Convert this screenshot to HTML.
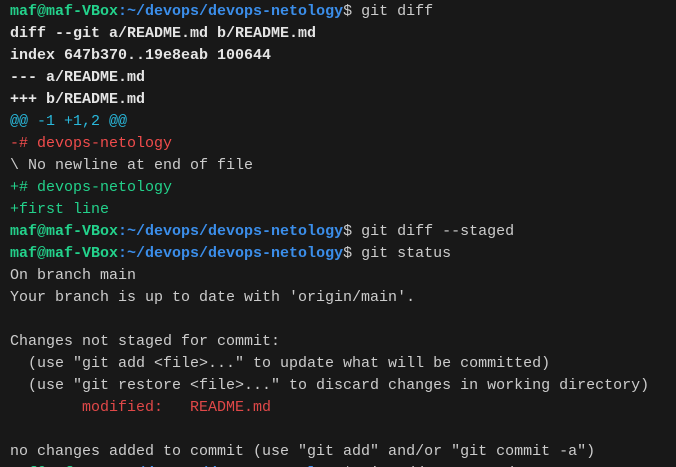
<!DOCTYPE html>
<html><head><meta charset="utf-8"><style>
html,body{margin:0;padding:0;background:#181818;width:676px;height:467px;overflow:hidden}
pre{margin:0;padding:1px 0 0 10px;font-family:"Liberation Mono",monospace;font-size:15px;line-height:22px;color:#cccccc;white-space:pre}
.b{font-weight:bold}
.g{color:#23d18b;font-weight:bold}
.u{color:#3b8eea;font-weight:bold}
.c{color:#29b8db}
.r{color:#f14c4c}
.gr{color:#23d18b}
.dr{color:#e04848}
.w{color:#e5e5e5;font-weight:bold}
</style></head><body><pre><span class="g">maf@maf-VBox</span><span class="u">:~/devops/devops-netology</span>$ git diff
<span class="w">diff --git a/README.md b/README.md</span>
<span class="w">index 647b370..19e8eab 100644</span>
<span class="w">--- a/README.md</span>
<span class="w">+++ b/README.md</span>
<span class="c">@@ -1 +1,2 @@</span>
<span class="r">-# devops-netology</span>
\ No newline at end of file
<span class="gr">+# devops-netology</span>
<span class="gr">+first line</span>
<span class="g">maf@maf-VBox</span><span class="u">:~/devops/devops-netology</span>$ git diff --staged
<span class="g">maf@maf-VBox</span><span class="u">:~/devops/devops-netology</span>$ git status
On branch main
Your branch is up to date with 'origin/main'.

Changes not staged for commit:
  (use "git add &lt;file&gt;..." to update what will be committed)
  (use "git restore &lt;file&gt;..." to discard changes in working directory)
        <span class="dr">modified:   README.md</span>

no changes added to commit (use "git add" and/or "git commit -a")
<span class="g">maf@maf-VBox</span><span class="u">:~/devops/devops-netology</span>$ git add README.md
</pre></body></html>
